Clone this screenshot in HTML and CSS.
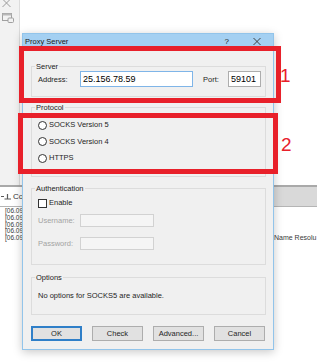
FILE: index.html
```html
<!DOCTYPE html>
<html>
<head>
<meta charset="utf-8">
<link rel="stylesheet" href="styles.css">
</head>
<body>
<div class="app">
  <div class="top">
    <div class="strip">
      <svg class="ico-x" width="9" height="8" viewBox="0 0 9 8"><path d="M0.5 -1 L8.5 7 M8.5 -1 L0.5 7" stroke="#9a9a9a" stroke-width="1" fill="none"/></svg>
      <svg class="ico-win" width="12" height="10" viewBox="0 0 12 10"><rect x="0.5" y="0.5" width="9" height="7" fill="none" stroke="#a0a0a0"/><rect x="0.5" y="0.5" width="9" height="2" fill="#b8b8b8"/><rect x="6" y="5" width="5.5" height="4.5" rx="1" fill="#f2f2f2" stroke="#a0a0a0"/></svg>
    </div>
  </div>
  <div class="tabs">
    <div class="tab">
      <svg width="10" height="7" viewBox="0 0 10 7"><path d="M0 3.5 H3 M3.5 6 H10 M6.5 1 V6" stroke="#5a5a5a" stroke-width="1.2" fill="none"/></svg>
      <span class="tab-text">Conn</span>
    </div>
  </div>
  <div class="log">
    <div class="logline"><span class="lt">[06.09]</span></div>
    <div class="logline"><span class="lt">[06.09]</span></div>
    <div class="logline"><span class="lt">[06.09]</span></div>
    <div class="logline"><span class="lt">[06.09]</span></div>
    <div class="logline"><span class="lt">[06.09]</span><span class="rt">Name Resolu</span></div>
  </div>
</div>

<div class="dialog">
  <div class="titlebar">
    <span class="title">Proxy Server</span>
    <span class="help">?</span>
    <svg class="close" width="8" height="7" viewBox="0 0 8 7"><path d="M0.5 0 L7.5 7 M7.5 0 L0.5 7" stroke="#333" stroke-width="0.9" fill="none"/></svg>
  </div>
  <div class="body">
    <div class="group g-server">
      <div class="group-title">Server</div>
      <div class="row server-row">
        <span class="lbl lbl-addr">Address:</span>
        <span class="edit edit-addr">25.156.78.59</span>
        <span class="lbl lbl-port">Port:</span>
        <span class="edit edit-port">59101</span>
      </div>
    </div>

    <div class="group g-proto">
      <div class="group-title">Protocol</div>
      <div class="radios">
        <div class="opt"><span class="radio"></span><span>SOCKS Version 5</span></div>
        <div class="opt"><span class="radio"></span><span>SOCKS Version 4</span></div>
        <div class="opt"><span class="radio"></span><span>HTTPS</span></div>
      </div>
    </div>

    <div class="group g-auth">
      <div class="group-title">Authentication</div>
      <div class="opt chk-row"><span class="check"></span><span>Enable</span></div>
      <div class="row dis-row r-user"><span class="lbl dis">Username:</span><span class="edit dis-edit"></span></div>
      <div class="row dis-row r-pass"><span class="lbl dis">Password:</span><span class="edit dis-edit"></span></div>
    </div>

    <div class="group g-opts">
      <div class="group-title">Options</div>
      <div class="opts-text">No options for SOCKS5 are available.</div>
    </div>

    <div class="buttons">
      <button class="btn btn-default">OK</button>
      <button class="btn">Check</button>
      <button class="btn">Advanced...</button>
      <button class="btn">Cancel</button>
    </div>
  </div>
</div>

<div class="mark mark1"></div>
<div class="num num1">1</div>
<div class="mark mark2"></div>
<div class="num num2">2</div>
</body>
</html>
```

FILE: styles.css
```css
html, body {
  margin: 0;
  padding: 0;
}
body {
  width: 317px;
  height: 363px;
  overflow: hidden;
  position: relative;
  background: #ffffff;
  font-family: "Liberation Sans", Arial, sans-serif;
  color: #1e1e1e;
}

/* background application */
.app {
  display: flex;
  flex-direction: column;
  height: 363px;
}
.top {
  height: 185px;
  display: flex;
}
.strip {
  width: 17px;
  background: #f2f2f2;
  border-right: 1px solid #dcdcdc;
  display: flex;
  flex-direction: column;
  align-items: flex-start;
  padding-left: 2px;
  gap: 5px;
}
.ico-x { display: block; }
.ico-win { display: block; }

.tabs {
  height: 22px;
  box-sizing: border-box;
  border-top: 2px solid #a9a9a9;
  border-bottom: 1px solid #b5b5b5;
  background: #d9d9d9;
  display: flex;
}
.tab {
  width: 70px;
  background: #ffffff;
  display: flex;
  align-items: center;
  gap: 2px;
  font-size: 8px;
  color: #333;
  padding-left: 1px;
}
.tab-text { line-height: 7px; }
.tab svg { display: block; }

.log {
  padding-top: 1px;
  font-size: 6.5px;
  line-height: 6.75px;
  color: #3a3a3a;
}
.logline {
  display: grid;
  grid-template-columns: 274px 1fr;
}
.lt {
  padding-left: 5px;
  white-space: nowrap;
}
.rt {
  white-space: nowrap;
  font-size: 7px;
  line-height: 6.75px;
}

/* dialog */
.dialog {
  position: absolute;
  left: 22px;
  top: 33px;
  width: 252px;
  height: 317px;
  box-sizing: border-box;
  border: 1px solid #92c4ea;
  background: #f0f0f0;
  box-shadow: 0 2px 9px rgba(0, 0, 0, 0.22);
  display: flex;
  flex-direction: column;
}
.titlebar {
  height: 15px;
  background: #a4d0f2;
  display: flex;
  align-items: center;
  padding-left: 2px;
  font-size: 7.5px;
  color: #1a1a1a;
}
.title { flex: 1; }
.help {
  font-size: 8px;
  margin-right: 24px;
}
.close {
  display: block;
  margin-right: 12px;
}

.body {
  padding: 17px 7px 0 8px;
  display: flex;
  flex-direction: column;
  font-size: 7.5px;
}
.group {
  border: 1px solid #dcdcdc;
  box-sizing: border-box;
  display: flex;
  flex-direction: column;
}
.group-title {
  align-self: flex-start;
  margin: -5px 0 0 3px;
  padding: 0 1px;
  line-height: 9px;
  background: #f0f0f0;
  color: #222;
}
.g-server { height: 31px; }
.g-proto { height: 70px; margin-top: 10px; }
.g-auth { height: 77px; margin-top: 11px; }
.g-opts { height: 38px; margin-top: 12px; }

.row {
  display: flex;
  align-items: center;
  padding-left: 6px;
}
.lbl { line-height: 9px; }
.lbl-addr { width: 42px; }
.lbl-port { width: 25px; margin-left: 10px; }
.edit {
  box-sizing: border-box;
  height: 16px;
  background: #ffffff;
  border: 1px solid #adadad;
  font-size: 9px;
  line-height: 14px;
  padding-left: 2px;
  color: #000;
}
.edit-addr { width: 113px; border-color: #7fb5e8; }
.edit-port { width: 33px; }

.radios {
  margin-top: 5px;
  padding-left: 6px;
}
.opt {
  display: flex;
  align-items: center;
  height: 16.5px;
  gap: 2px;
  line-height: 8px;
}
.radio {
  width: 9px;
  height: 9px;
  box-sizing: border-box;
  border: 1px solid #333;
  border-radius: 50%;
  background: #ffffff;
}
.chk-row {
  margin-top: 5px;
  height: 10px;
  padding-left: 6px;
}
.check {
  width: 9px;
  height: 9px;
  box-sizing: border-box;
  border: 1px solid #333;
  background: #ffffff;
}
.dis { width: 42px; color: #a3a3a3; }
.dis-edit {
  width: 74px;
  height: 13px;
  background: #f5f5f5;
  border-color: #d2d2d2;
}
.r-user { margin-top: 6px; }
.r-pass { margin-top: 10px; }

.opts-text {
  margin-top: 9px;
  padding-left: 6px;
  line-height: 9px;
}

.buttons {
  display: flex;
  gap: 10px;
  margin-top: 11px;
}
.btn {
  width: 51px;
  height: 15px;
  box-sizing: border-box;
  margin: 0;
  padding: 0;
  border: 1px solid #adadad;
  background: #e1e1e1;
  font-family: "Liberation Sans", Arial, sans-serif;
  font-size: 7.5px;
  color: #1e1e1e;
}
.btn-default {
  border: 2px solid #2f7fc8;
}

/* annotations */
.mark {
  position: absolute;
  box-sizing: border-box;
  border: 5px solid #e8202a;
}
.mark1 { left: 19px; top: 46px; width: 262px; height: 57px; }
.mark2 { left: 18px; top: 113px; width: 260px; height: 61px; }
.num {
  position: absolute;
  font-size: 19px;
  line-height: 19px;
  color: #e8202a;
}
.num1 { left: 280px; top: 66px; }
.num2 { left: 281px; top: 135px; }
```
